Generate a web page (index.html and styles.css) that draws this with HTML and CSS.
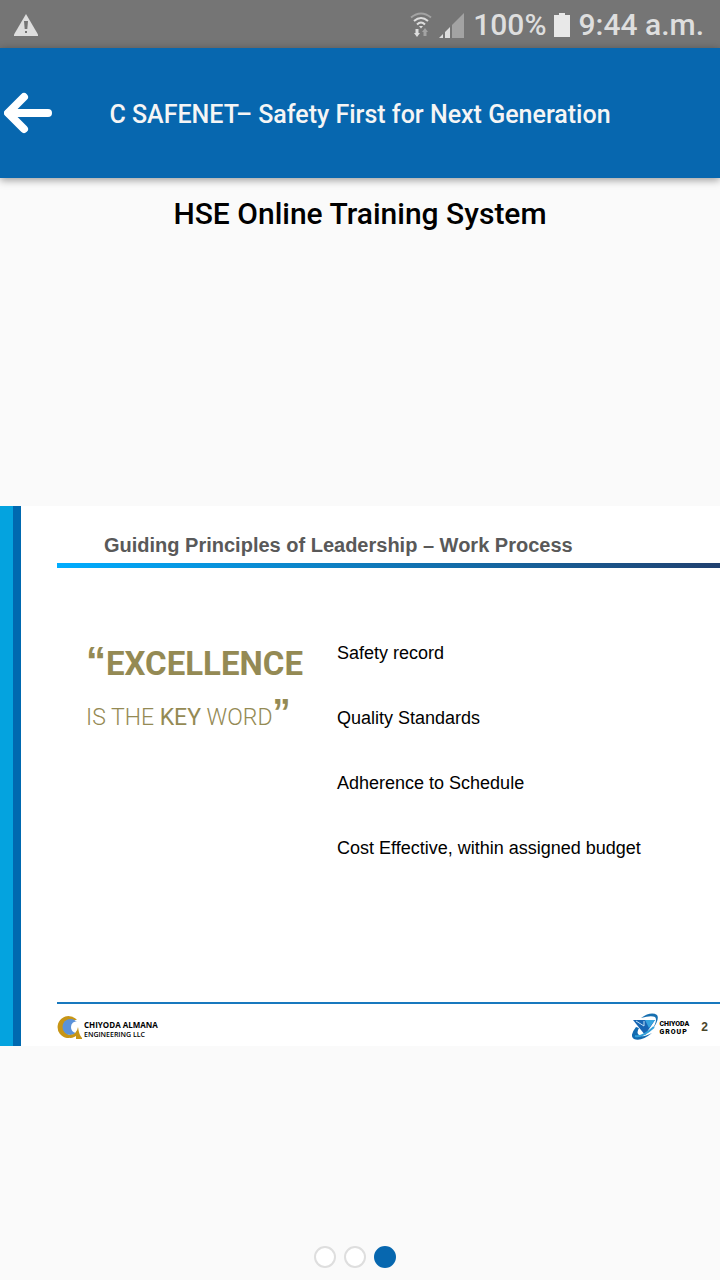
FILE: index.html
```html
<!DOCTYPE html>
<html lang="en">
<head>
<meta charset="utf-8">
<meta name="viewport" content="width=device-width, initial-scale=1">
<title>HSE Online Training System</title>
<link rel="stylesheet" href="styles.css">
</head>
<body>
<div class="status-bar">
  <svg class="warning" width="24" height="22" viewBox="0 0 24 22" aria-hidden="true">
    <path d="M12 0 24 20.500V22H0V20.500Z" fill="#dedede"/>
    <path d="M10 7h4l-.7 8h-2.600zM11 17h2v2h-2z" fill="#757575"/>
  </svg>
  <div class="indicators">
    <svg width="22" height="26" viewBox="0 0 22 26" aria-hidden="true">
      <g fill="none" stroke-width="2">
        <path d="M1 5.500Q11-2.500 21 5.500" stroke="#a3a3a3"/>
        <path d="M4 9Q11 3 18 9M7 12.500Q11 8.500 15 12.500" stroke="#dedede"/>
      </g>
      <path d="M9 14h4l-2 2.500zM5.500 17h3v4H10l-3 4-3-4h1.500z" fill="#dedede"/>
      <path d="M13.500 24h3v-4H18l-3-4-3 4h1.500z" fill="#a3a3a3"/>
    </svg>
    <svg width="25" height="25" viewBox="0 0 25 25" aria-hidden="true">
      <path d="M0 25 4 21V25ZM6 25V19L11 14V25Z" fill="#dedede"/>
      <path d="M13 25V12L25 0V25Z" fill="#a3a3a3"/>
    </svg>
    <span class="percent">100%</span>
    <svg class="battery" width="16" height="24" viewBox="0 0 16 24" aria-hidden="true">
      <path d="M0 2H5V0H11V2H16V24H0Z" fill="#e8e8e8"/>
    </svg>
    <span>9:44 a.m.</span>
  </div>
</div>
<header class="app-bar">
  <button class="back" type="button" aria-label="Back">
    <svg width="48" height="42" viewBox="0 0 48 42" aria-hidden="true">
      <path d="M20 5 4 21 20 37" fill="none" stroke="#fff" stroke-width="8" stroke-linecap="round" stroke-linejoin="round"/>
      <path d="M5 21H44" stroke="#fff" stroke-width="8" stroke-linecap="round"/>
    </svg>
  </button>
  <p class="app-title">C SAFENET– Safety First for Next Generation</p>
</header>
<main class="content">
  <h1 class="page-title">HSE Online Training System</h1>
  <div class="stage">
    <article class="slide">
      <h2 class="slide-title">Guiding Principles of Leadership – Work Process</h2>
      <div class="slide-body">
        <blockquote class="quote">
          <p class="quote-main"><span class="mark">“</span>EXCELLENCE</p>
          <p class="quote-sub">IS THE <strong>KEY</strong> WORD<span class="mark">”</span></p>
        </blockquote>
        <ul class="points">
          <li>Safety record</li>
          <li>Quality Standards</li>
          <li>Adherence to Schedule</li>
          <li>Cost Effective, within assigned budget</li>
        </ul>
      </div>
      <footer class="slide-footer">
        <div class="brand">
          <svg width="25" height="23" viewBox="0 0 25 23" aria-hidden="true">
            <path d="M20 4A11 11 0 1 0 18 20Q9 20 7 13Q6 3 20 4Z" fill="#c79516"/>
            <circle cx="13.500" cy="11" r="8" fill="#5b92d9"/>
            <path d="M22 5Q14 5 14 11Q14 16 19 17L22 12Z" fill="#fff"/>
            <path d="M13 19Q20 18 21 11Q22 19 25 22V23H19V20Q16 22 13 22Z" fill="#c79516"/>
          </svg>
          <p class="brand-name">CHIYODA ALMANA<br><span class="brand-sub">ENGINEERING LLC</span></p>
        </div>
        <div class="group">
          <svg width="27" height="28" viewBox="0 0 27 28" aria-hidden="true">
            <path d="M1 7H23L13 22Z" fill="#1765b3"/>
            <path d="M13 7H23L17 15Z" fill="#36a4df"/>
            <path d="M4 8 12 13 12 8" fill="none" stroke="#bfe0f5"/>
            <path d="M9 5Q19-2 25 2Q28 6 20 17Q26 7 23 4Q19 2 9 5Z" fill="#176fb0"/>
            <path d="M4 14Q-3 23 2 26Q9 29 20 20Q11 25 7 22Q4 20 7 15Z" fill="#126ab0"/>
            <path d="M3 23Q10 25 22 14" fill="none" stroke="#32a0da" stroke-width="2"/>
          </svg>
          <p class="group-name">CHIYODA<br><span class="group-sub">GROUP</span></p>
          <span class="page-number">2</span>
        </div>
      </footer>
    </article>
  </div>
</main>
<nav class="dots" aria-label="Slides">
  <button class="dot" type="button" aria-label="Slide 1"></button>
  <button class="dot" type="button" aria-label="Slide 2"></button>
  <button class="dot dot-active" type="button" aria-label="Slide 3" aria-current="true"></button>
</nav>
</body>
</html>
```
FILE: styles.css
```css
* {
  box-sizing: border-box;
}

body {
  margin: 0;
  min-height: 100vh;
  display: flex;
  flex-direction: column;
  background: #fafafa;
  color: #000;
  font-family: Roboto, "Noto Sans", sans-serif;
}

p, h1, h2, ul, blockquote {
  margin: 0;
  padding: 0;
}

svg {
  display: block;
  flex: none;
}

button {
  padding: 0;
  border: 0;
  background: none;
}

.status-bar {
  display: flex;
  align-items: center;
  justify-content: space-between;
  padding: 2px 16px 0 14px;
  height: 48px;
  background: #757575;
  color: #dedede;
  font-size: 30px;
  font-weight: 500;
  line-height: 46px;
}

.indicators {
  display: flex;
  align-items: center;
  gap: 7px;
}

.percent {
  margin-left: 2px;
}

.battery {
  margin-right: 2px;
}

.app-bar {
  display: grid;
  grid-template-columns: 56px 1fr 56px;
  align-items: center;
  height: 130px;
  background: #0767af;
  box-shadow: 0 2px 8px rgba(0, 0, 0, 0.4);
}

.back {
  padding-left: 4px;
}

.app-title {
  padding-top: 4px;
  color: #f5f5f5;
  font-size: 25px;
  font-weight: 500;
  line-height: 32px;
  text-align: center;
}

.content {
  flex: 1;
  display: flex;
  flex-direction: column;
}

.page-title {
  padding-top: 16px;
  font-size: 30px;
  font-weight: 500;
  line-height: 40px;
  text-align: center;
}

.stage {
  flex: 1;
  display: flex;
  flex-direction: column;
  justify-content: center;
  padding-top: 72px;
}

.slide {
  display: flex;
  flex-direction: column;
  min-height: 540px;
  padding-left: 57px;
  background: linear-gradient(90deg, #04a3df 13px, #0069b0 13px, #0069b0 21px, #fff 21px);
  font-family: "Liberation Sans", Arial, sans-serif;
}

.slide-title {
  padding: 24px 0 3px 47px;
  border-bottom: 5px solid;
  border-image: linear-gradient(90deg, #00adff, #20406f) 1;
  color: #595959;
  font-size: 20px;
  line-height: 30px;
}

.slide-body {
  flex: 1;
  display: grid;
  grid-template-columns: 280px 1fr;
  padding-top: 53px;
}

.quote {
  padding: 16px 0 0 29px;
  color: #948a54;
  font-family: Roboto, sans-serif;
  white-space: nowrap;
}

.quote-main {
  font-size: 33px;
  font-weight: 700;
  line-height: 54px;
}

.quote-sub {
  font-size: 23px;
  font-weight: 300;
  line-height: 54px;
}

.quote-sub .mark {
  font-size: 36px;
}

.mark {
  font-family: "Liberation Sans", Arial, sans-serif;
  font-size: 40px;
  font-weight: 700;
  line-height: 1;
}

.points {
  list-style: none;
  font-size: 18px;
  line-height: 65px;
}

.slide-footer {
  display: flex;
  align-items: center;
  justify-content: space-between;
  height: 44px;
  padding: 4px 12px 0 0;
  border-top: 2px solid #1878be;
}

.brand, .group {
  display: flex;
  align-items: center;
}

.brand {
  gap: 2px;
}

.brand-name {
  padding-top: 4px;
  font-family: "Open Sans", sans-serif;
  font-size: 8px;
  font-weight: 700;
  line-height: 9px;
}

.brand-sub {
  font-size: 7px;
  font-weight: 600;
}

.group-name {
  padding-top: 2px;
  font-family: Roboto, sans-serif;
  font-size: 7px;
  font-weight: 900;
  line-height: 8px;
}

.group-sub {
  letter-spacing: 1px;
}

.page-number {
  margin-left: 12px;
  color: #4a452a;
  font-size: 12px;
  font-weight: 700;
}

.dots {
  display: flex;
  justify-content: center;
  gap: 8px;
  padding: 0 10px 12px 0;
}

.dot {
  width: 22px;
  height: 22px;
  border: 2px solid #dedede;
  border-radius: 50%;
  background: #fff;
}

.dot-active {
  border-color: #0767af;
  background: #0767af;
}
```
